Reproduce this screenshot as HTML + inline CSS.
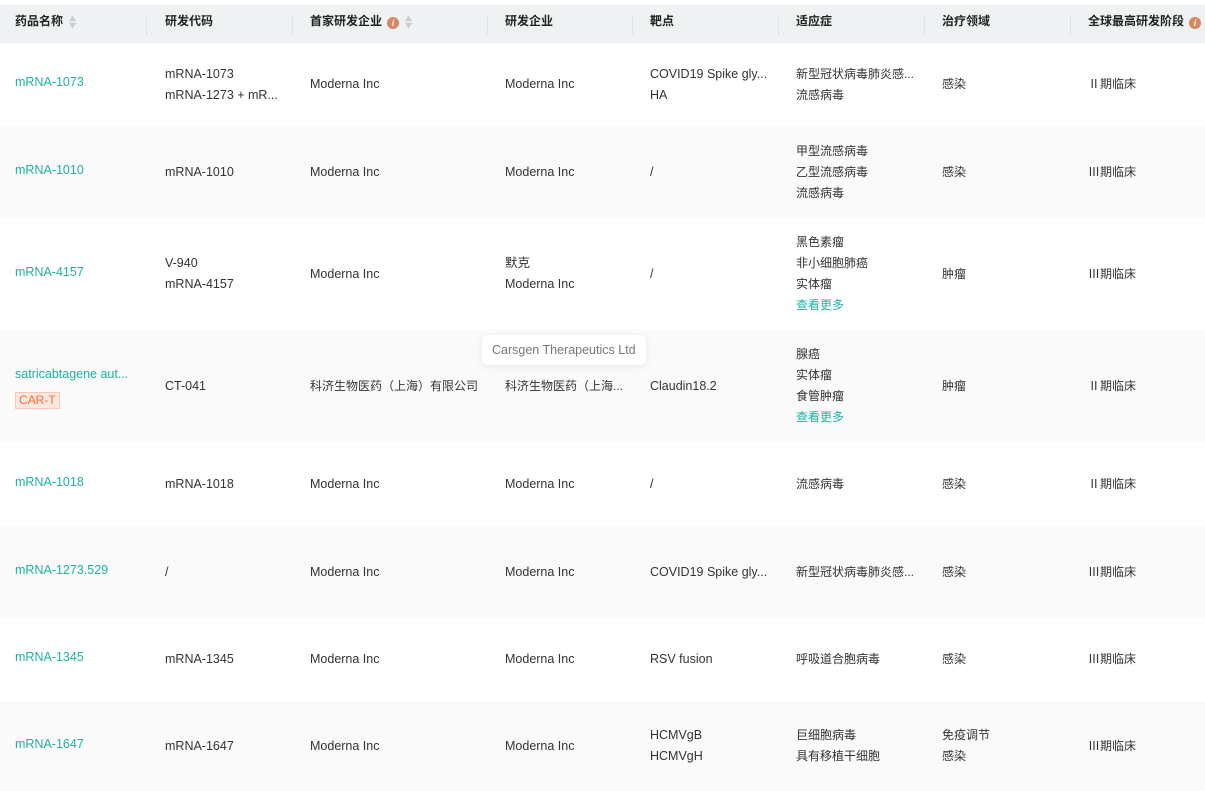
<!DOCTYPE html><html><head><meta charset="utf-8"><style>
*{margin:0;padding:0;box-sizing:border-box}
body{width:1205px;height:791px;overflow:hidden;background:#fff;font-family:"Liberation Sans","Noto Sans CJK SC",sans-serif;color:#333;font-size:12.5px;position:relative}
.hd{position:absolute;top:5px;left:0;width:1205px;height:38px;background:#eef2f3;font-weight:bold;font-size:12px;color:#222}
.hd div{position:absolute;top:0;height:38px;line-height:33px}
.dv{position:absolute;top:10px;width:1px;height:20px;background:#dde3e5}
.row{position:absolute;left:0;width:1205px}
.g{background:#fafafa}
.c{position:absolute;top:0;height:100%;display:flex;flex-direction:column;justify-content:center;line-height:21px;white-space:nowrap}
.z{font-size:12px}
.n{color:#1fb1a3;margin-top:-2px}
.more{color:#1fb1a3}
.tag{display:inline-block;border:1px solid #fbc6b5;background:#fde8e0;color:#f56a3c;font-size:12px;line-height:15px;padding:0 3px;margin-top:7px;width:45px}
.i{display:inline-block;width:12px;height:12px;border-radius:50%;background:#d9875f;color:#fff;font-size:9px;line-height:12px;text-align:center;font-style:italic;vertical-align:-1px;margin-left:5px}
.s{display:inline-block;color:#c8cdd0;font-size:10px;line-height:7px;vertical-align:-3px;margin-left:7px;transform:scaleX(1.3)}
.tip{position:absolute;left:482px;top:335px;background:#fff;border-radius:6px;box-shadow:0 2px 8px rgba(0,0,0,.08);padding:0 10px;height:30px;line-height:30px;color:#777;font-size:12.5px}
</style></head><body>
<div class="hd">
<div style="left:15px">药品名称<span class="s">▴<br>▾</span></div>
<div style="left:165px">研发代码</div>
<div style="left:310px">首家研发企业<span class="i">i</span><span class="s">▴<br>▾</span></div>
<div style="left:505px">研发企业</div>
<div style="left:650px">靶点</div>
<div style="left:796px">适应症</div>
<div style="left:942px">治疗领域</div>
<div style="left:1088px">全球最高研发阶段<span class="i">i</span></div>
<span class="dv" style="left:146px"></span><span class="dv" style="left:292px"></span><span class="dv" style="left:487px"></span><span class="dv" style="left:632px"></span><span class="dv" style="left:778px"></span><span class="dv" style="left:924px"></span><span class="dv" style="left:1070px"></span>
</div>

<div class="row" style="top:43px;height:83px">
<div class="c n" style="left:15px">mRNA-1073</div>
<div class="c" style="left:165px">mRNA-1073<br>mRNA-1273 + mR...</div>
<div class="c" style="left:310px">Moderna Inc</div>
<div class="c" style="left:505px">Moderna Inc</div>
<div class="c" style="left:650px">COVID19 Spike gly...<br>HA</div>
<div class="c z" style="left:796px">新型冠状病毒肺炎感...<br>流感病毒</div>
<div class="c z" style="left:942px">感染</div>
<div class="c z" style="left:1088px">Ⅱ期临床</div>
</div>

<div class="row g" style="top:126px;height:92px">
<div class="c n" style="left:15px">mRNA-1010</div>
<div class="c" style="left:165px">mRNA-1010</div>
<div class="c" style="left:310px">Moderna Inc</div>
<div class="c" style="left:505px">Moderna Inc</div>
<div class="c" style="left:650px">/</div>
<div class="c z" style="left:796px">甲型流感病毒<br>乙型流感病毒<br>流感病毒</div>
<div class="c z" style="left:942px">感染</div>
<div class="c z" style="left:1088px">Ⅲ期临床</div>
</div>

<div class="row" style="top:218px;height:112px">
<div class="c n" style="left:15px">mRNA-4157</div>
<div class="c" style="left:165px">V-940<br>mRNA-4157</div>
<div class="c" style="left:310px">Moderna Inc</div>
<div class="c" style="left:505px">默克<br>Moderna Inc</div>
<div class="c" style="left:650px">/</div>
<div class="c z" style="left:796px">黑色素瘤<br>非小细胞肺癌<br>实体瘤<br><span class="more">查看更多</span></div>
<div class="c z" style="left:942px">肿瘤</div>
<div class="c z" style="left:1088px">Ⅲ期临床</div>
</div>

<div class="row g" style="top:330px;height:112px">
<div class="c" style="left:15px;margin-top:0px"><span style="color:#1fb1a3">satricabtagene aut...</span><span class="tag">CAR-T</span></div>
<div class="c" style="left:165px">CT-041</div>
<div class="c z" style="left:310px">科济生物医药（上海）有限公司</div>
<div class="c z" style="left:505px">科济生物医药（上海...</div>
<div class="c" style="left:650px">Claudin18.2</div>
<div class="c z" style="left:796px">腺癌<br>实体瘤<br>食管肿瘤<br><span class="more">查看更多</span></div>
<div class="c z" style="left:942px">肿瘤</div>
<div class="c z" style="left:1088px">Ⅱ期临床</div>
</div>

<div class="row" style="top:442px;height:84px">
<div class="c n" style="left:15px">mRNA-1018</div>
<div class="c" style="left:165px">mRNA-1018</div>
<div class="c" style="left:310px">Moderna Inc</div>
<div class="c" style="left:505px">Moderna Inc</div>
<div class="c" style="left:650px">/</div>
<div class="c z" style="left:796px">流感病毒</div>
<div class="c z" style="left:942px">感染</div>
<div class="c z" style="left:1088px">Ⅱ期临床</div>
</div>

<div class="row g" style="top:526px;height:92px">
<div class="c n" style="left:15px">mRNA-1273.529</div>
<div class="c" style="left:165px">/</div>
<div class="c" style="left:310px">Moderna Inc</div>
<div class="c" style="left:505px">Moderna Inc</div>
<div class="c" style="left:650px">COVID19 Spike gly...</div>
<div class="c z" style="left:796px">新型冠状病毒肺炎感...</div>
<div class="c z" style="left:942px">感染</div>
<div class="c z" style="left:1088px">Ⅲ期临床</div>
</div>

<div class="row" style="top:618px;height:83px">
<div class="c n" style="left:15px">mRNA-1345</div>
<div class="c" style="left:165px">mRNA-1345</div>
<div class="c" style="left:310px">Moderna Inc</div>
<div class="c" style="left:505px">Moderna Inc</div>
<div class="c" style="left:650px">RSV fusion</div>
<div class="c z" style="left:796px">呼吸道合胞病毒</div>
<div class="c z" style="left:942px">感染</div>
<div class="c z" style="left:1088px">Ⅲ期临床</div>
</div>

<div class="row g" style="top:701px;height:90px">
<div class="c n" style="left:15px">mRNA-1647</div>
<div class="c" style="left:165px">mRNA-1647</div>
<div class="c" style="left:310px">Moderna Inc</div>
<div class="c" style="left:505px">Moderna Inc</div>
<div class="c" style="left:650px">HCMVgB<br>HCMVgH</div>
<div class="c z" style="left:796px">巨细胞病毒<br>具有移植干细胞</div>
<div class="c z" style="left:942px">免疫调节<br>感染</div>
<div class="c z" style="left:1088px">Ⅲ期临床</div>
</div>

<div class="tip">Carsgen Therapeutics Ltd</div>
</body></html>
